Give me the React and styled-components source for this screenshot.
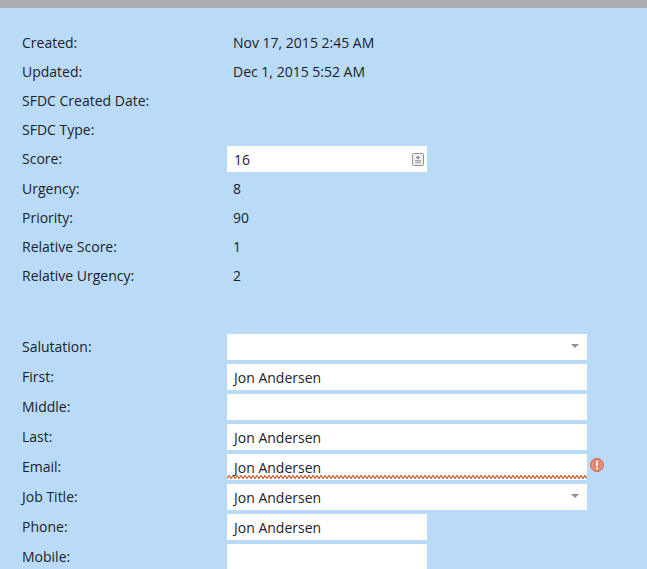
import React from 'react';
import styled, { createGlobalStyle } from 'styled-components';

const GlobalStyle = createGlobalStyle`
  html, body {
    margin: 0;
    padding: 0;
    height: 569px;
    overflow: hidden;
    background: #b9dbf7;
    font-family: "Open Sans", "Noto Sans", sans-serif;
    font-size: 14px;
    color: #1c2229;
  }
`;

const TopBar = styled.div`
  height: 8px;
  background: #adabb1;
`;

const Page = styled.div`
  padding: 20px 0 0 22px;
`;

const InfoSection = styled.div`
  display: flex;
  flex-direction: column;
  margin-bottom: 44px;
`;

const FormSection = styled.div`
  display: flex;
  flex-direction: column;
  gap: 4px;
`;

const InfoRow = styled.div`
  display: flex;
  align-items: center;
  height: ${p => (p.$tall ? 30 : 29)}px;
`;

const FormRow = styled.div`
  display: flex;
  align-items: center;
  height: 26px;
`;

const Label = styled.div`
  width: 205px;
  flex: none;
`;

const FieldLabel = styled(Label)`
  padding-bottom: 2px;
`;

const Value = styled.div`
  padding-left: 6px;
`;

const Input = styled.div`
  position: relative;
  box-sizing: border-box;
  display: flex;
  align-items: center;
  width: ${p => (p.$short ? 200 : 360)}px;
  height: 26px;
  padding: 1px 7px 0;
  background: #fff;
`;

const Squiggle = styled.svg`
  position: absolute;
  left: 0;
  bottom: 1px;
  width: 100%;
  height: 4px;
`;

const Caret = styled.span`
  position: absolute;
  right: 8px;
  top: 10px;
  width: 0;
  height: 0;
  border-left: 4px solid transparent;
  border-right: 4px solid transparent;
  border-top: 4px solid #8f9193;
`;

const ContactIcon = styled.svg`
  position: absolute;
  right: 3px;
  top: 7px;
  width: 12px;
  height: 13px;
`;

const ErrorIcon = styled.svg`
  align-self: flex-start;
  width: 14px;
  height: 14px;
  margin: 4px 0 0 3px;
  flex: none;
`;

const info = [
  ['Created:', 'Nov 17, 2015 2:45 AM'],
  ['Updated:', 'Dec 1, 2015 5:52 AM'],
  ['SFDC Created Date:', ''],
  ['SFDC Type:', ''],
  ['Score:', '16', 'input'],
  ['Urgency:', '8'],
  ['Priority:', '90'],
  ['Relative Score:', '1'],
  ['Relative Urgency:', '2'],
];

const fields = [
  { label: 'Salutation:', value: '', select: true },
  { label: 'First:', value: 'Jon Andersen' },
  { label: 'Middle:', value: '' },
  { label: 'Last:', value: 'Jon Andersen' },
  { label: 'Email:', value: 'Jon Andersen', error: true },
  { label: 'Job Title:', value: 'Jon Andersen', select: true },
  { label: 'Phone:', value: 'Jon Andersen', short: true },
  { label: 'Mobile:', value: '', short: true },
];

const wave = Array.from({ length: 91 }, (_, i) => `${i * 4},3.5 ${i * 4 + 2},0.5`).join(' ');

export default function App() {
  return (
    <>
      <GlobalStyle />
      <TopBar />
      <Page>
        <InfoSection>
          {info.map(([label, value, kind]) =>
            kind === 'input' ? (
              <InfoRow key={label} $tall>
                <FieldLabel>{label}</FieldLabel>
                <Input $short>
                  {value}
                  <ContactIcon viewBox="0 0 12 13">
                    <rect x="0.5" y="0.5" width="11" height="12" rx="1" fill="#eef0f1" stroke="#8d9296" />
                    <circle cx="6" cy="4.6" r="1.7" fill="#8d9296" />
                    <rect x="3" y="7" width="6" height="1.5" fill="#a5a9ac" />
                    <rect x="3" y="9" width="6" height="1.5" fill="#b9bcbe" />
                  </ContactIcon>
                </Input>
              </InfoRow>
            ) : (
              <InfoRow key={label}>
                <Label>{label}</Label>
                <Value>{value}</Value>
              </InfoRow>
            )
          )}
        </InfoSection>
        <FormSection>
          {fields.map(f => (
            <FormRow key={f.label}>
              <FieldLabel>{f.label}</FieldLabel>
              <Input $short={f.short}>
                {f.value}
                {f.select && <Caret />}
                {f.error && (
                  <Squiggle viewBox="0 0 360 4">
                    <polyline points={wave} fill="none" stroke="#c4532a" strokeWidth="1.1" />
                  </Squiggle>
                )}
              </Input>
              {f.error && (
                <ErrorIcon viewBox="0 0 14 14">
                  <circle cx="7" cy="7" r="6.5" fill="#e58068" stroke="#cf6a50" />
                  <circle cx="7" cy="7" r="4.8" fill="none" stroke="#f0a592" strokeWidth="0.8" />
                  <rect x="6" y="3" width="2" height="5.5" rx="1" fill="#fff" />
                  <circle cx="7" cy="10.3" r="1.1" fill="#fff" />
                </ErrorIcon>
              )}
            </FormRow>
          ))}
        </FormSection>
      </Page>
    </>
  );
}
